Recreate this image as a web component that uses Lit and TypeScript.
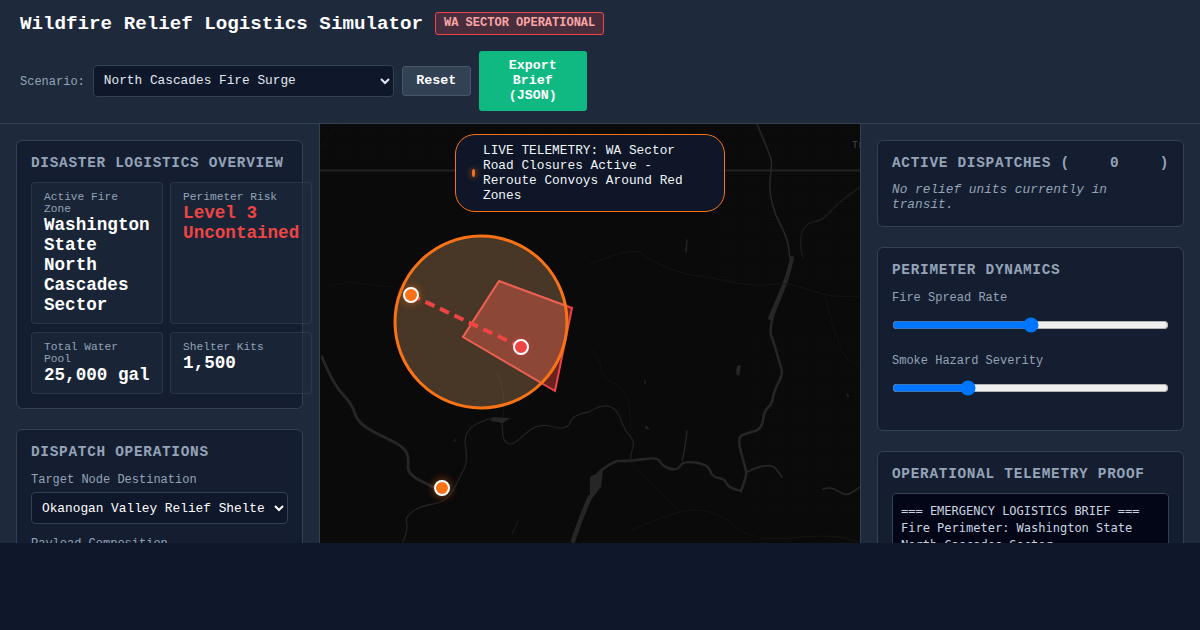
import { LitElement, html, css, svg } from "lit";
import { customElement } from "lit/decorators.js";

type Pt = [number, number];
const P = (s: string): Pt[] => s.trim().split(/\s+/).map((p) => p.split(",").map(Number) as Pt);
const smooth = (pts: Pt[]) => {
  let d = `M${pts[0][0]} ${pts[0][1]}`;
  for (let i = 1; i < pts.length - 1; i++) {
    const mx = (pts[i][0] + pts[i + 1][0]) / 2;
    const my = (pts[i][1] + pts[i + 1][1]) / 2;
    d += `Q${pts[i][0]} ${pts[i][1]} ${mx} ${my}`;
  }
  const l = pts[pts.length - 1];
  return d + `L${l[0]} ${l[1]}`;
};

const rivers: [string, number, string][] = [
  ["757,124 766,146 772,160 771,172 769,190 775,215 787,237 790,258", 1.6, "#262626"],
  ["792,259 790,271 783,291 772,317 770,334 773,340 780,364 783,374 774,391 772,404 764,411 762,429 748,433 737,437 745,467 747,474 741,491", 2.6, "#262626"],
  ["792,258 788,275 780,295 770,318", 4, "#262626"],
  ["803,257 798,241 807,222 822,221 837,204 860,187", 1.2, "#1e1e1e"],
  ["617,461 633,461 658,457 662,466 677,471 683,461 708,464 712,477 725,479 728,487 741,491", 2.4, "#262626"],
  ["598,473 608,465 617,461", 2.6, "#262626"],
  ["590,497 584,510 573,541", 4.5, "#262626"],
  ["687,431 685,448 682,461", 1.4, "#262626"],
  ["747,472 770,461 782,477", 1.8, "#262626"],
  ["823,489 830,487 838,491 847,496 860,487", 1.6, "#262626"],
  ["590,411 603,404 617,409 625,431 635,441 630,457 632,461", 1.2, "#222"],
  ["590,412 573,414 567,431 537,422 512,447 502,439 503,421 490,417 463,431 468,461 460,477 447,502 420,506 405,517 408,527 403,542", 1.3, "#222"],
  ["322,357 333,384 352,404 357,421 373,432 403,446 409,457 407,474 433,487", 2.8, "#262626"],
  ["497,371 505,394 503,417", 0.8, "#1a1a1a"],
  ["590,347 600,358 602,378 623,387 631,407 630,431", 0.7, "#151515"],
  ["630,531 677,509 718,511 753,542 830,534 860,542", 0.7, "#171717"],
  ["630,461 677,509", 0.7, "#151515"],
  ["590,264 633,246 650,261 683,274 707,277 757,287 787,282 825,296 860,297", 0.8, "#161616"],
  ["825,296 835,334", 0.7, "#151515"],
  ["327,287 347,281 363,284 395,287", 0.7, "#141414"],
  ["320,148 337,124", 0.7, "#141414"],
  ["687,240 686,252", 1.4, "#262626"],
  ["518,521 512,534", 1, "#1f1f1f"],
  ["836,334 843,358 860,367", 0.7, "#151515"],
];
const lakes = [
  "M590 477L603 470L601 487L590 501Z",
  "M737 366L741 365L739 376L736 374Z",
  "M645 378L646 384L644 383Z",
  "M646 425L650 430L645 428Z",
  "M846 393L849 395L848 398Z",
  "M455 438L456 441L454 442Z",
  "M493 417L510 418L503 423L490 421Z",
];

const stats = [
  { k: "Active Fire Zone", v: "Washington State North Cascades Sector" },
  { k: "Perimeter Risk", v: "Level 3 Uncontained", danger: true },
  { k: "Total Water Pool", v: "25,000 gal" },
  { k: "Shelter Kits", v: "1,500" },
];

@customElement("app-root")
export class AppRoot extends LitElement {
  static styles = css`
    :host { display: block; height: 630px; background: #0f172a; font-family: "Liberation Mono", monospace; color: #e2e8f0; }
    * { box-sizing: border-box; }
    .app { height: 543px; display: flex; flex-direction: column; overflow: hidden; background: #1e293b; }
    header { height: 124px; flex: none; padding: 12px 20px; border-bottom: 1px solid #334155; display: flex; flex-direction: column; gap: 16px; }
    .titlerow { display: flex; align-items: center; gap: 12px; height: 23px; }
    h1 { margin: 0; font-size: 19.2px; font-weight: 700; color: #fff; }
    .badge { font-size: 12px; font-weight: 700; color: #fca5a5; background: rgba(239,68,68,.2); border: 1px solid #ef4444; border-radius: 3px; padding: 4px 8px; height: 23px; line-height: 13px; }
    .controls { display: flex; align-items: center; gap: 8px; height: 60px; }
    .controls label { font-size: 12px; color: #94a3b8; padding-top: 2px; }
    select { font-family: inherit; font-size: 12.8px; height: 32px; background: #0f172a; color: #e2e8f0; border: 1px solid #334155; border-radius: 4px; padding: 0 6px 2px; }
    .scenario { width: 301px; }
    button { font-family: inherit; font-size: 13.33px; font-weight: 700; color: #fff; border-radius: 3px; line-height: 15px; }
    .reset { height: 30px; width: 69px; padding: 0 0 2px; background: #334155; border: 1px solid #475569; }
    .export { height: 60px; width: 108px; padding: 0 14px 2px; background: #10b981; border: 0; }
    main { flex: 1; min-height: 0; display: grid; grid-template-columns: 320px 540px 340px; }
    .side { padding: 16px; display: flex; flex-direction: column; gap: 20px; overflow: hidden; min-width: 0; }
    .left { border-right: 1px solid #334155; }
    .right { border-left: 1px solid #334155; }
    .card { flex: none; background: rgba(15,23,42,.6); border: 1px solid #334155; border-radius: 6px; padding: 14px; }
    h2 { margin: 0 0 10px; font-size: 14.4px; font-weight: 700; letter-spacing: .72px; color: #94a3b8; text-transform: uppercase; line-height: 17px; }
    h2.split { display: flex; justify-content: space-between; }
    .grid { display: grid; grid-template-columns: 1fr 1fr; gap: 8px 7.5px; }
    .cell { background: rgba(30,41,59,.5); border: 1px solid rgba(51,65,85,.6); border-radius: 4px; padding: 8px 12px; }
    .k { font-size: 11.2px; line-height: 12px; color: #94a3b8; }
    .v { font-size: 17.6px; line-height: 20px; font-weight: 700; color: #fff; }
    .v.danger { color: #ef4444; }
    .field { font-size: 12px; line-height: 14px; color: #94a3b8; padding-top: 2px; margin-bottom: 5px; }
    .wide { width: 100%; color: #fff; padding-bottom: 0; }
    .gap { margin-top: 11px; }
    .empty { margin: 0; font-size: 12.8px; line-height: 15px; font-style: italic; color: #94a3b8; }
    .range { display: block; width: 100%; margin: 12px 0 19px; height: 16px; }
    .lastrange { margin-bottom: 20px; }
    .term { background: #020617; border: 1px solid #334155; border-radius: 4px; padding: 9px 8px; font-family: "DejaVu Sans Mono", monospace; font-size: 12px; line-height: 17px; color: #cbd5e1; height: 160px; }
    .map { position: relative; overflow: hidden; background: #0a0a0a; }
    .map svg { display: block; width: 540px; height: 419px; }
    .pill { position: absolute; left: 135px; top: 10px; width: 270px; height: 78px; display: flex; align-items: center; gap: 8px; padding: 8px 16px; background: rgba(15,23,42,.95); border: 1px solid #f97316; border-radius: 20px; font-size: 12.8px; line-height: 15px; color: #f1f5f9; }
    .pulse { flex: none; width: 3px; height: 8px; border-radius: 50%; background: #f97316; box-shadow: 0 0 6px #f97316; }
    .pin { position: absolute; width: 16px; height: 16px; margin: -8px 0 0 -8px; border-radius: 50%; border: 2px solid #fff; }
    .pin.o { background: #f97316; box-shadow: 0 0 8px rgba(249,115,22,.6); }
    .pin.r { background: #ef4444; box-shadow: 0 0 6px rgba(239,68,68,.4); }
  `;

  private mapSvg() {
    return html`<svg viewBox="320 124 540 419" aria-hidden="true">
      <defs>
        <pattern id="dots" width="3" height="3" patternUnits="userSpaceOnUse"><rect width="1" height="1" fill="#0e0e0e"></rect></pattern>
      </defs>
      <rect x="320" y="124" width="540" height="46" fill="url(#dots)"></rect>
      <rect x="720" y="170" width="140" height="110" fill="url(#dots)"></rect>
      <rect x="745" y="334" width="115" height="180" fill="url(#dots)"></rect>
      <path d="M320 170.5H860" stroke="#222" stroke-width="2" fill="none"></path>
      ${rivers.map(([p, w, c]) => svg`<path d=${smooth(P(p))} stroke=${c} stroke-width=${w} fill="none" stroke-linejoin="round" stroke-linecap="round"></path>`)}
      ${lakes.map((d) => svg`<path d=${d} fill="#262626"></path>`)}
      <text x="852" y="148" font-size="10" font-family="Liberation Mono" fill="#444">Tr</text>
      <path d="M499 281L572 308L555 391L463 337Z" fill="rgba(239,68,68,.42)" stroke="#ef4444" stroke-width="2"></path>
      <circle cx="481" cy="322" r="86" fill="rgba(240,173,114,.27)" stroke="#f97316" stroke-width="3"></circle>
      <path d="M411 295L521 347" stroke="#ef4444" stroke-width="4" stroke-dasharray="10 6" fill="none"></path>
    </svg>`;
  }

  render() {
    return html`<div class="app">
      <header>
        <div class="titlerow">
          <h1>Wildfire Relief Logistics Simulator</h1>
          <span class="badge">WA SECTOR OPERATIONAL</span>
        </div>
        <div class="controls">
          <label>Scenario:</label>
          <select class="scenario"><option>North Cascades Fire Surge</option></select>
          <button class="reset">Reset</button>
          <button class="export">Export Brief (JSON)</button>
        </div>
      </header>
      <main>
        <section class="side left">
          <div class="card">
            <h2>Disaster Logistics Overview</h2>
            <div class="grid">
              ${stats.map((s) => html`<div class="cell"><div class="k">${s.k}</div><div class="v ${s.danger ? "danger" : ""}">${s.v}</div></div>`)}
            </div>
          </div>
          <div class="card">
            <h2>Dispatch Operations</h2>
            <div class="field">Target Node Destination</div>
            <select class="wide"><option>Okanogan Valley Relief Shelter</option></select>
            <div class="field gap">Payload Composition</div>
          </div>
        </section>
        <section class="map">
          ${this.mapSvg()}
          <div class="pill"><span class="pulse"></span><span>LIVE TELEMETRY: WA Sector Road Closures Active - Reroute Convoys Around Red Zones</span></div>
          <span class="pin o" style="left:91px;top:171px"></span>
          <span class="pin r" style="left:201px;top:223px"></span>
          <span class="pin o" style="left:122px;top:364px"></span>
        </section>
        <section class="side right">
          <div class="card">
            <h2 class="split"><span>Active Dispatches (</span><span>0</span><span>)</span></h2>
            <p class="empty">No relief units currently in transit.</p>
          </div>
          <div class="card">
            <h2>Perimeter Dynamics</h2>
            <div class="field">Fire Spread Rate</div>
            <input class="range" type="range" min="0" max="100" value="50" />
            <div class="field">Smoke Hazard Severity</div>
            <input class="range lastrange" type="range" min="0" max="100" value="26" />
          </div>
          <div class="card">
            <h2>Operational Telemetry Proof</h2>
            <div class="term">=== EMERGENCY LOGISTICS BRIEF ===<br />Fire Perimeter: Washington State North Cascades Sector</div>
          </div>
        </section>
      </main>
    </div>`;
  }
}
